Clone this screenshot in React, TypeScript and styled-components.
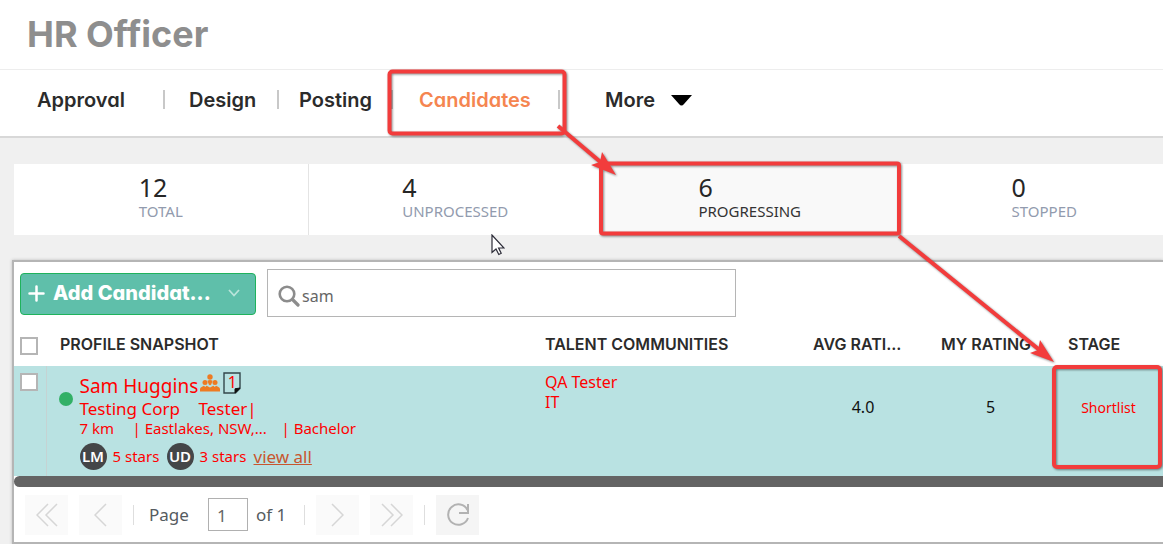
import React from "react";
import styled, { createGlobalStyle, css } from "styled-components";

const GlobalStyle = createGlobalStyle`
  * { box-sizing: border-box; }
  body {
    margin: 0;
    background: #f0f0f0;
    color: #2b2b2b;
    font-family: "Noto Sans", "Open Sans", sans-serif;
    font-size: 16px;
  }
  button, input { font-family: inherit; }
`;

const heading = css`
  font-family: Inter, "Liberation Sans", sans-serif;
  font-feature-settings: "cv11";
`;

const Page = styled.div`
  position: relative;
  min-height: 100vh;
  overflow: hidden;
`;

const Header = styled.header`
  display: flex;
  align-items: center;
  height: 70px;
  padding: 0 27px 2px;
  background: #fff;
  border-bottom: 1px solid #ededed;
`;

const Title = styled.h1`
  ${heading}
  margin: 0;
  font-size: 36px;
  line-height: 40px;
  font-weight: 700;
  color: #8e8e8e;
`;

const Nav = styled.nav`
  display: flex;
  height: 68px;
  padding-left: 37px;
  background: #fff;
  border-bottom: 2px solid #d8d8d8;
`;

const NavLink = styled.a<{ $active?: boolean; $width: number }>`
  ${heading}
  display: flex;
  align-items: center;
  width: ${(p) => p.$width}px;
  height: 60px;
  font-size: 20px;
  font-weight: 600;
  text-decoration: none;
  color: ${(p) => (p.$active ? "#f58550" : "#2b2b2b")};
`;

const NavDivider = styled.span<{ $gap: number }>`
  width: 2px;
  height: 19px;
  margin: 20px ${(p) => p.$gap}px 0 0;
  background: #c8c8c8;
`;

const Caret = styled.svg`
  margin-left: 16px;
`;

const Stats = styled.section`
  display: grid;
  grid-template-columns: repeat(4, 1fr);
  height: 71px;
  margin: 26px -29px 0 14px;
`;

const Stat = styled.a<{ $active?: boolean }>`
  display: flex;
  justify-content: center;
  padding-top: 8px;
  background: ${(p) => (p.$active ? "#f9f9f9" : "#fff")};
  border-right: 1px solid #e4e4e4;
  color: ${(p) => (p.$active ? "#333" : "#929bae")};
  text-decoration: none;
`;

const StatCount = styled.div`
  font-size: 25px;
  line-height: 30px;
  color: #262626;
`;

const StatLabel = styled.div`
  font-size: 15px;
  line-height: 18px;
`;

const Panel = styled.main`
  margin: 25px 0 0 12px;
  background: #fff;
  border: 2px solid #b5b5b5;
  border-width: 2px 0 3px 2px;
  box-shadow: 0 0 3px #bbb;
`;

const Toolbar = styled.div`
  display: flex;
  gap: 11px;
  padding: 7px 6px 0;
`;

const AddButton = styled.button`
  ${heading}
  display: flex;
  align-items: center;
  width: 236px;
  height: 42px;
  margin-top: 4px;
  padding: 0 15px 2px 7px;
  border: 1px solid #1fb25c;
  border-radius: 4px;
  background: #5fbfaa;
  color: #fff;
  font-size: 20px;
  font-weight: 800;
`;

const AddLabel = styled.span`
  flex: 1;
  padding-left: 8px;
  text-align: left;
  white-space: nowrap;
`;

const SearchBox = styled.label`
  display: flex;
  align-items: center;
  width: 469px;
  height: 48px;
  padding: 6px 10px 0;
  border: 1px solid #b5b5b5;
`;

const SearchInput = styled.input`
  flex: 1;
  min-width: 0;
  padding: 0 0 0 2px;
  border: 0;
  outline: 0;
  background: transparent;
  color: #666;
  font-size: 16px;
`;

const Table = styled.table`
  width: 100%;
  table-layout: fixed;
  border-collapse: collapse;
`;

const Col = styled.col<{ $width?: number }>`
  width: ${(p) => (p.$width ? `${p.$width}px` : "auto")};
`;

const HeadCell = styled.th`
  ${heading}
  height: 49px;
  padding: 5px 0 0 14px;
  font-size: 16px;
  font-weight: 600;
  text-align: left;
  white-space: nowrap;
`;

const HeadCheck = styled.th`
  padding: 8px 0 0 6px;
  text-align: left;
`;

const Row = styled.tr`
  height: 110px;
  background: #b9e2e2;
  color: red;
`;

const CheckCell = styled.td`
  padding: 7px 0 0 6px;
  border-right: 1px solid #c5d3d3;
  vertical-align: top;
`;

const Checkbox = styled.input`
  display: block;
  appearance: none;
  width: 18px;
  height: 18px;
  margin: 0;
  border: 2px solid #b5b5b5;
  background: #fff;
`;

const ProfileCell = styled.td`
  padding: 8px 0 0 12px;
  vertical-align: top;
`;

const Profile = styled.div`
  display: flex;
  gap: 7px;
`;

const StatusDot = styled.span`
  width: 14px;
  height: 14px;
  margin-top: 18px;
  border-radius: 50%;
  background: #32b066;
`;

const Line = styled.div<{ $size: number; $height: number }>`
  display: flex;
  align-items: center;
  height: ${(p) => p.$height}px;
  font-size: ${(p) => p.$size}px;
  white-space: pre;
`;

const NoteBadge = styled.span`
  display: grid;
  margin: -6px 0 0 3px;
  font-size: 16px;
  line-height: 20px;
  text-align: center;
  & > * { grid-area: 1 / 1; }
`;

const Crowd = styled.svg`
  margin: -6px 0 0 2px;
`;

const Fact = styled.span<{ $width?: number }>`
  width: ${(p) => (p.$width ? `${p.$width}px` : "auto")};
`;

const Reviews = styled.div`
  display: flex;
  align-items: center;
  gap: 6px;
  margin-top: 6px;
  font-size: 15px;
  line-height: 27px;
`;

const Stars = styled.span`
  width: 48px;
`;

const Avatar = styled.span`
  width: 27px;
  height: 27px;
  border-radius: 50%;
  background: #444648;
  color: #fff;
  font-size: 15px;
  font-weight: 600;
  text-align: center;
`;

const ViewAll = styled.a`
  color: #c8562f;
  font-size: 17px;
`;

const TalentCell = styled.td`
  padding: 6px 0 0 14px;
  font-size: 16px;
  line-height: 20px;
  vertical-align: top;
`;

const RatingCell = styled.td`
  padding: 0 0 28px;
  color: #111;
  font-size: 16px;
  text-align: center;
`;

const StageCell = styled(RatingCell)`
  color: red;
  font-size: 14px;
`;

const ScrollThumb = styled.div`
  height: 11px;
  border-radius: 6px 0 0 6px;
  background: #646464;
`;

const Pager = styled.footer`
  display: flex;
  align-items: center;
  gap: 11px;
  height: 55px;
  padding-left: 11px;
  color: #555b60;
  font-size: 17px;
`;

const PagerButton = styled.button<{ $enabled?: boolean }>`
  display: grid;
  place-items: center;
  width: 43px;
  height: 40px;
  padding: 0;
  border: 0;
  background: ${(p) => (p.$enabled ? "#f5f5f5" : "#fafafa")};
  color: ${(p) => (p.$enabled ? "#b2b2b2" : "#d6d6d6")};
`;

const PagerDivider = styled.span`
  width: 1px;
  height: 20px;
  background: #dedede;
`;

const PagePosition = styled.div`
  display: flex;
  align-items: center;
  gap: 8px;
  padding: 0 7px 0 4px;
`;

const PageField = styled.label`
  display: flex;
  align-items: center;
  gap: 19px;
`;

const PageInput = styled.input`
  width: 40px;
  height: 33px;
  padding: 2px 8px 0;
  border: 1px solid #b0b0b0;
  color: #666;
  font-size: 17px;
`;

const Annotations = styled.svg`
  position: absolute;
  top: 0;
  left: 0;
  pointer-events: none;
  filter: drop-shadow(1px 1px 1px rgba(0, 0, 0, 0.45));
`;

const Cursor = styled.svg`
  position: absolute;
  top: 234px;
  left: 491px;
`;

const stats = [
  { count: 12, label: "TOTAL" },
  { count: 4, label: "UNPROCESSED" },
  { count: 6, label: "PROGRESSING", active: true },
  { count: 0, label: "STOPPED" },
];

const Chevrons = ({ d, width }: { d: string; width: number }) => (
  <svg width={width} height="24" viewBox={`0 0 ${width} 24`} fill="none" stroke="currentColor" strokeWidth="1.5">
    <path d={d} />
  </svg>
);

export default function App() {
  return (
    <Page>
      <GlobalStyle />
      <Header>
        <Title>HR Officer</Title>
      </Header>
      <Nav>
        <NavLink href="#approval" $width={126}>Approval</NavLink>
        <NavDivider $gap={24} />
        <NavLink href="#design" $width={88}>Design</NavLink>
        <NavDivider $gap={20} />
        <NavLink href="#posting" $width={92}>Posting</NavLink>
        <NavDivider $gap={26} />
        <NavLink href="#candidates" $width={139} $active>Candidates</NavLink>
        <NavDivider $gap={45} />
        <NavLink href="#more" $width={100}>
          More
          <Caret width="21" height="11" viewBox="0 0 21 11">
            <path d="M0 0H21L13 9Q10.500 12 8 9Z" fill="#000" />
          </Caret>
        </NavLink>
      </Nav>

      <Stats>
        {stats.map((s) => (
          <Stat key={s.label} href="#stats" $active={s.active}>
            <div>
              <StatCount>{s.count}</StatCount>
              <StatLabel>{s.label}</StatLabel>
            </div>
          </Stat>
        ))}
      </Stats>

      <Panel>
        <Toolbar>
          <AddButton type="button">
            <svg width="17" height="17" viewBox="0 0 17 17" stroke="#fff" strokeWidth="2.500" strokeLinecap="round">
              <path d="M8.500 1.500V15.500M1.500 8.500H15.500" />
            </svg>
            <AddLabel>Add Candidat...</AddLabel>
            <svg width="12" height="8" viewBox="0 0 12 8" fill="none" stroke="#b9e4da" strokeWidth="1.800">
              <path d="M1 1L6 6.500L11 1" />
            </svg>
          </AddButton>
          <SearchBox>
            <svg width="22" height="22" viewBox="0 0 22 22" fill="none" stroke="#8c8c8c">
              <circle cx="9" cy="9" r="7.300" strokeWidth="2.600" />
              <path d="M14.500 14.500L20 20" strokeWidth="3.200" strokeLinecap="round" />
            </svg>
            <SearchInput aria-label="Search candidates" defaultValue="sam" />
          </SearchBox>
        </Toolbar>

        <Table>
          <colgroup>
            <Col $width={32} />
            <Col />
            <Col $width={268} />
            <Col $width={128} />
            <Col $width={127} />
            <Col $width={109} />
          </colgroup>
          <thead>
            <tr>
              <HeadCheck><Checkbox type="checkbox" aria-label="Select all" /></HeadCheck>
              <HeadCell>PROFILE SNAPSHOT</HeadCell>
              <HeadCell>TALENT COMMUNITIES</HeadCell>
              <HeadCell>AVG RATI...</HeadCell>
              <HeadCell>MY RATING</HeadCell>
              <HeadCell>STAGE</HeadCell>
            </tr>
          </thead>
          <tbody>
            <Row>
              <CheckCell><Checkbox type="checkbox" aria-label="Select Sam Huggins" /></CheckCell>
              <ProfileCell>
                <Profile>
                  <StatusDot />
                  <div>
                    <Line $size={19} $height={24}>
                      Sam Huggins
                      <Crowd width="20" height="18" viewBox="0 0 20 18" fill="#ee7b22">
                        <circle cx="10" cy="3" r="2.700" />
                        <circle cx="5" cy="8.600" r="2.500" />
                        <circle cx="15" cy="8.600" r="2.500" />
                        <path d="M7.400 6.800Q10 5.400 12.600 6.800L11.200 10.500Q10 11.800 8.800 10.500ZM0 17.500V15Q0 13.600 2 12.800L4 11.800L5.200 13L6.600 11.800L10 13.600L13.400 11.800L14.800 13L16 11.800L18 12.800Q20 13.600 20 15V17.500Z" />
                      </Crowd>
                      <NoteBadge>
                        <svg width="18" height="22" viewBox="0 0 18 22">
                          <path d="M1 1H17V16.500L12.500 21H1Z" fill="none" stroke="#33474b" strokeWidth="1.400" />
                          <path d="M17 16L12 21V16.800Z" fill="#111" stroke="#111" />
                        </svg>
                        <span>1</span>
                      </NoteBadge>
                    </Line>
                    <Line $size={17} $height={20}>
                      <Fact $width={119}>Testing Corp</Fact>
                      <Fact>Tester|</Fact>
                    </Line>
                    <Line $size={15} $height={19}>
                      <Fact $width={53}>7 km</Fact>
                      <Fact $width={149}>| Eastlakes, NSW,...</Fact>
                      <Fact>| Bachelor</Fact>
                    </Line>
                    <Reviews>
                      <Avatar>LM</Avatar>
                      <Stars>5 stars</Stars>
                      <Avatar>UD</Avatar>
                      <Stars>3 stars</Stars>
                      <ViewAll href="#reviews">view all</ViewAll>
                    </Reviews>
                  </div>
                </Profile>
              </ProfileCell>
              <TalentCell>QA Tester<br />IT</TalentCell>
              <RatingCell>4.0</RatingCell>
              <RatingCell>5</RatingCell>
              <StageCell>Shortlist</StageCell>
            </Row>
          </tbody>
        </Table>
        <ScrollThumb />

        <Pager>
          <PagerButton type="button" aria-label="First page"><Chevrons width={22} d="M12 1L1 12L12 23M21 1L10 12L21 23" /></PagerButton>
          <PagerButton type="button" aria-label="Previous page"><Chevrons width={13} d="M12 1L1 12L12 23" /></PagerButton>
          <PagerDivider />
          <PagePosition>
            <PageField>
              Page
              <PageInput defaultValue="1" />
            </PageField>
            <span>of 1</span>
          </PagePosition>
          <PagerDivider />
          <PagerButton type="button" aria-label="Next page"><Chevrons width={13} d="M1 1L12 12L1 23" /></PagerButton>
          <PagerButton type="button" aria-label="Last page"><Chevrons width={22} d="M1 1L12 12L1 23M10 1L21 12L10 23" /></PagerButton>
          <PagerDivider />
          <PagerButton type="button" aria-label="Refresh" $enabled>
            <svg width="24" height="24" viewBox="0 0 24 24" fill="none" stroke="currentColor" strokeWidth="2">
              <path d="M22 15A10.200 10.200 0 1 1 21.500 7M22 1V10H13" />
            </svg>
          </PagerButton>
        </Pager>
      </Panel>

      <Cursor width="14" height="22" viewBox="0 0 14 22">
        <path d="M1 1V18.500L5 15L7.800 20.500L10.200 19.300L7.600 14H13Z" fill="#fff" stroke="#2c2c38" strokeWidth="1.200" />
      </Cursor>
      <Annotations width="1163" height="544" viewBox="0 0 1163 544" fill="none" stroke="#f23c3c" strokeWidth="4">
        <rect x="389.500" y="71.500" width="175" height="62" rx="3" />
        <rect x="601" y="163.500" width="298" height="70" rx="2" />
        <rect x="1054" y="367" width="106" height="100" rx="3" />
        <path d="M558 126L604 165M899 236L1042 352" />
        <path d="M616 175L591 165L600 162L602 152ZM1054 362L1030 353L1038 350L1040 340Z" fill="#f23c3c" stroke="none" />
      </Annotations>
    </Page>
  );
}
